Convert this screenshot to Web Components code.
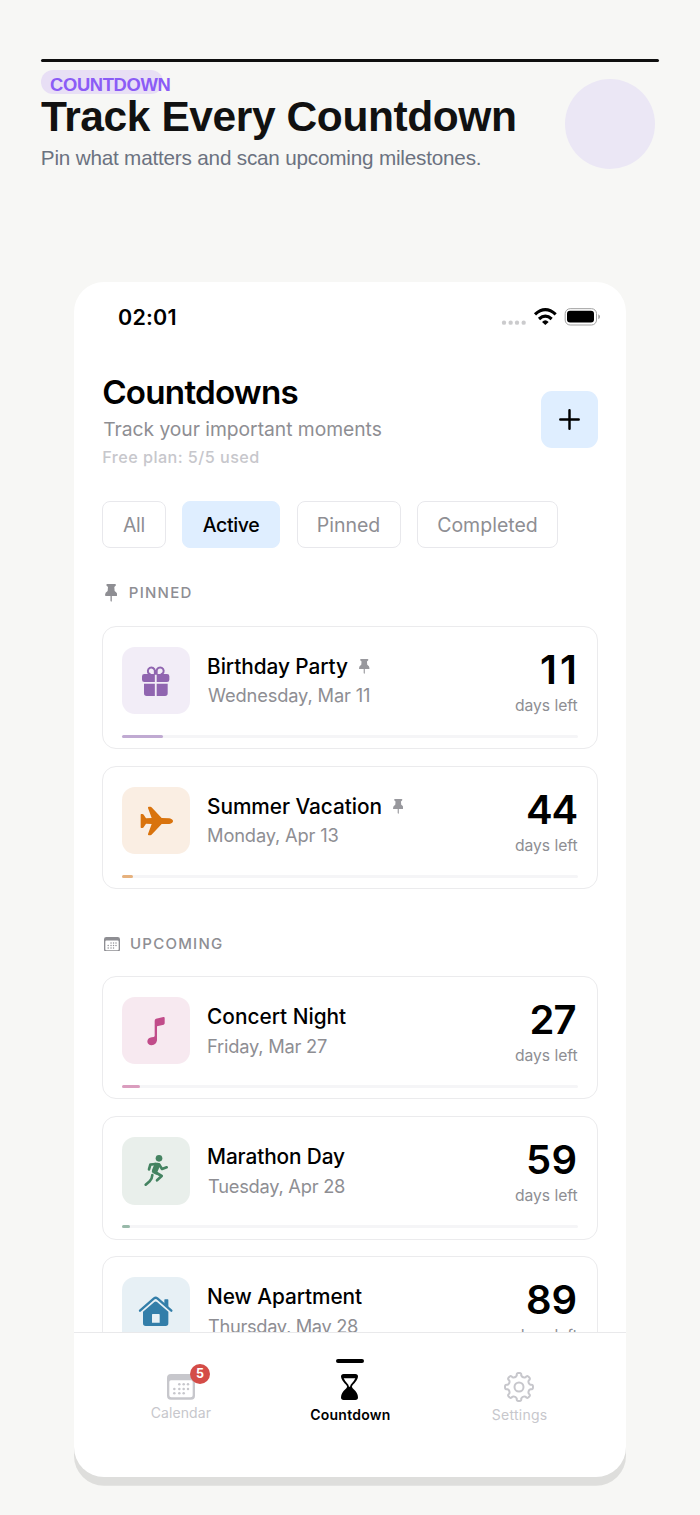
<!DOCTYPE html>
<html lang="en">
<head>
<meta charset="utf-8">
<title>Track Every Countdown</title>
<style>
html, body { margin: 0; background: #f7f7f5; }
body { width: 700px; height: 1515px; overflow: hidden; font-family: Inter, "Liberation Sans", sans-serif; }
</style>
</head>
<body>
<promo-page></promo-page>
<script>
/* Single line of text whose visible glyphs span exactly the width given in "w". */
const ctx = document.createElement('canvas').getContext('2d');
class TextLine extends HTMLElement {
  connectedCallback() {
    const a = n => this.getAttribute(n);
    const root = this.shadowRoot || this.attachShadow({ mode: 'open' });
    root.innerHTML = `<style>
      :host { display: block; flex: none; white-space: nowrap; width: ${a('w')}px; height: ${a('lh')}px;
        font-size: ${a('size')}px; font-weight: ${a('weight') || 400}; line-height: ${a('lh')}px; }
      span { display: inline-block; }
    </style><span><slot></slot></span>`;
    const span = root.querySelector('span');
    const text = this.textContent;
    const cs = getComputedStyle(this);
    ctx.font = `${cs.fontWeight} ${cs.fontSize} ${cs.fontFamily}`;
    const m = ctx.measureText(text);
    const left = -m.actualBoundingBoxLeft;
    const right = m.width - m.actualBoundingBoxRight;
    const ink = span.getBoundingClientRect().width - left - right;
    span.style.letterSpacing = (parseFloat(a('w')) - ink) / (text.length - 1 || 1) + 'px';
    span.style.marginLeft = -left + 'px';
  }
}
customElements.define('text-line', TextLine);

function gearPath() {
  const n = 8, c = 45;
  const P = (r, d) => { const t = d * Math.PI / 180; return (c + r * Math.sin(t)).toFixed(1) + ' ' + (c - r * Math.cos(t)).toFixed(1); };
  let d = '';
  for (let i = 0; i < n; i++) {
    const b = i * 45;
    d += (i ? 'L' : 'M') + P(35, b - 11) + 'Q' + P(42, b - 10.5) + ' ' + P(42, b - 4) + 'L' + P(42, b + 4)
       + 'Q' + P(42, b + 10.5) + ' ' + P(35, b + 11) + 'Q' + P(28.5, b + 22.5) + ' ' + P(35, b + 34);
  }
  return d + 'Z';
}
const CAL = '<path fill="currentColor" fill-rule="evenodd" d="M12 0H72Q84 0 84 12V65Q84 77 72 77H12Q0 77 0 65V12Q0 0 12 0ZM12 19Q7 19 7 24V64Q7 70 13 70H71Q77 70 77 64V24Q77 19 72 19Z"/><g fill="currentColor">'
  + [[37,31],[50,31],[63,31],[22,45],[37,45],[50,45],[63,45],[22,58],[37,58],[50,58]].map(p => `<circle cx="${p[0]}" cy="${p[1]}" r="3.8"/>`).join('') + '</g>';
const ICONS = {
  gift: ['0 0 203 203', '<g fill="currentColor"><path d="M67 81H98.500V105H67Q60 105 60 98V88Q60 81 67 81ZM104 81H135Q142 81 142 88V98Q142 105 135 105H104ZM66 110H98.500V147H74Q66 147 66 139ZM104 110H137V139Q137 147 129 147H104Z"/></g><g fill="none" stroke="currentColor" stroke-width="6"><path d="M98.500 83V71A10.500 10.500 0 1 0 81 80L85 83M104 83V71A10.500 10.500 0 1 1 121 80L117 83"/></g>'],
  plane: ['0 0 203 203', '<path fill="currentColor" d="M142 94Q153 97 153 102Q153 108 142 111L119 111L90 142Q88 145 85 145H80Q77 144 78 141L89 111L72 110L65 121Q64 123 61 123H58Q56 123 56 121V83Q56 81 58 81H61Q64 81 65 83L72 94L89 93L78 63Q77 60 80 59H85Q88 59 90 62L119 93Z"/>'],
  music: ['0 0 203 203', '<path fill="currentColor" d="M98 71Q98 66 102 65L124 60Q128 59 128 63V79Q128 82 125 83L105 88V130Q103 143 89 145Q76 144 76 133Q77 123 89 121L95 120Q98 119 98 116Z"/>'],
  run: ['0 0 203 203', '<circle cx="111" cy="64" r="10" fill="currentColor"/><g fill="none" stroke="currentColor" stroke-width="8" stroke-linecap="round" stroke-linejoin="round"><path d="M101 81L85 83L81 97"/><path d="M111 82L120 96L134 91"/><path d="M99 105L119 117L105 130"/><path d="M91 114Q90 127 83 133L71 143"/></g><path fill="currentColor" d="M98 77H108Q116 79 114 87L106 105L104 114L92 108Q88 105 90 99L96 84Z"/>'],
  house: ['0 0 203 203', '<path fill="none" stroke="currentColor" stroke-width="7" stroke-linecap="round" stroke-linejoin="round" d="M54 101L96 64Q101 60 106 64L148 101"/><path fill="currentColor" d="M127 69Q127 67 129 67H137Q139 67 139 69V93L127 83Z"/><path fill="currentColor" fill-rule="evenodd" d="M63 104L97 75Q101 72 105 75L139 104V139Q139 147 131 147H71Q63 147 63 139ZM90 113V137H113V113Q113 111 111 111H92Q90 111 90 113Z"/>'],
  pin: ['0 0 37 54', '<path fill="currentColor" d="M7 0H30Q33 0 33 3Q33 5 31 6L28 9L29 21Q37 26 37 33Q37 36 34 36H20.500V50L18.500 54L16.500 50V36H3Q0 36 0 33Q0 26 8 21L9 9L6 6Q4 5 4 3Q4 0 7 0Z"/>'],
  calendar: ['0 0 84 77', CAL],
  hourglass: ['0 0 51 78', '<path fill="currentColor" fill-rule="evenodd" d="M8 0H43Q51 0 51 8Q50 18 35 33Q30 38 35 43Q51 57 51 70Q51 78 43 78H8Q0 78 0 70Q0 57 16 43Q21 38 16 33Q1 18 0 8Q0 0 8 0ZM8 13Q11 21 22 32L24 38H27L29 32Q40 21 43 13Z"/>'],
  gear: ['0 0 90 90', `<g fill="none" stroke="currentColor" stroke-width="6" stroke-linejoin="round"><path d="${gearPath()}"/><circle cx="45" cy="45" r="13.500"/></g>`],
  plus: ['0 0 64 64', '<path fill="none" stroke="currentColor" stroke-width="7.500" stroke-linecap="round" d="M32 4V60M4 32H60"/>'],
  status: ['0 0 300 54', '<g fill="#cbcbcd"><circle cx="9" cy="44" r="6.500"/><circle cx="29" cy="44" r="6.500"/><circle cx="48" cy="44" r="6.500"/><circle cx="68" cy="44" r="6.500"/></g><g fill="none" stroke="#000" stroke-width="9.500"><path d="M102 19Q133 -9 164 19"/><path d="M114 33Q133 16 152 33"/></g><path d="M123 42Q133 32 143 42L133 51Z"/><rect x="192.500" y="2" width="94" height="49" rx="15" fill="none" stroke="#a0a0a0" stroke-width="3"/><rect x="198" y="8.500" width="81" height="35" rx="9"/><path fill="#a0a0a0" d="M292 19Q297 21 297 26.500Q297 32 292 34Z"/>']
};
class UiIcon extends HTMLElement {
  connectedCallback() {
    const [box, body] = ICONS[this.getAttribute('name')];
    const w = this.getAttribute('w'), h = this.getAttribute('h');
    this.attachShadow({ mode: 'open' }).innerHTML = `<style>:host{display:block;flex:none;width:${w}px;height:${h}px}svg{display:block}</style>
      <svg width="${w}" height="${h}" viewBox="${box}" preserveAspectRatio="none">${body}</svg>`;
  }
}
customElements.define('ui-icon', UiIcon);

class PromoHeader extends HTMLElement {
  connectedCallback() {
    this.attachShadow({ mode: 'open' }).innerHTML = `<style>
      :host { display: block; height: 223px; padding: 59px 41px 0; font-family: "Liberation Sans", Arial, sans-serif; }
      .rule { height: 2.700px; border-radius: 2px; background: #0f0f0f; }
      .row { display: flex; justify-content: space-between; padding: 8.300px 3.700px 0 0; }
      .pill { width: 113px; height: 24px; padding-left: 9px; border-radius: 12px; background: #e8dff5; color: #8b5cf6; }
      .title { color: #111; } .sub { color: #6b7280; }
      .dot { width: 90.600px; height: 90.600px; margin-top: 8.700px; border-radius: 50%; background: #ebe7f5; }
    </style>
    <div class="rule"></div>
    <div class="row">
      <div>
        <div class="pill"><text-line size="18.400" weight="700" w="120.500" lh="30">COUNTDOWN</text-line></div>
        <text-line class="title" size="42.500" weight="700" w="474" lh="46.400">Track Every Countdown</text-line>
        <text-line class="sub" size="20.700" w="438" lh="36.500" style="margin-left:.8px">Pin what matters and scan upcoming milestones.</text-line>
      </div>
      <div class="dot"></div>
    </div>`;
  }
}
customElements.define('promo-header', PromoHeader);

class FilterChip extends HTMLElement {
  connectedCallback() {
    const on = this.hasAttribute('active');
    this.attachShadow({ mode: 'open' }).innerHTML = `<style>
      :host { display: flex; justify-content: center; box-sizing: border-box; width: ${this.getAttribute('box')}px; height: 47px;
        border: 1.500px solid ${on ? '#dfeeff' : '#e8e8ec'}; border-radius: 8px; background: ${on ? '#dfeeff' : '#fff'}; color: ${on ? '#000' : '#8e8e93'}; }
    </style><slot></slot>`;
  }
}
customElements.define('filter-chip', FilterChip);

class SectionLabel extends HTMLElement {
  connectedCallback() {
    this.attachShadow({ mode: 'open' }).innerHTML = `<style>
      :host { display: flex; align-items: center; box-sizing: border-box; color: #8e8e93; }
    </style><slot></slot>`;
  }
}
customElements.define('section-label', SectionLabel);

class CountdownCard extends HTMLElement {
  connectedCallback() {
    const a = n => this.getAttribute(n);
    this.attachShadow({ mode: 'open' }).innerHTML = `<style>
      :host { display: block; box-sizing: border-box; height: 123.700px; margin-bottom: 16.400px; border: 1px solid #ebebed; border-radius: 14px; padding: 20px 19.500px 0 19.200px; }
      .row { display: flex; height: 88.200px; }
      .tile { width: 67.700px; height: 67.700px; border-radius: 13px; background: ${a('tint')}; color: ${a('tone')}; }
      .text { flex: 1; padding-left: 18.200px; color: #8e8e93; }
      .name { display: flex; align-items: center; gap: 11px; height: 38.800px; color: #000; }
      .name text-line { margin-top: 3px; }
      .name ui-icon { color: #98989d; margin-top: 1px; }
      .count { display: flex; flex-direction: column; align-items: flex-end; color: #8e8e93; }
      .num { color: #000; margin-right: ${a('inset') || 1}px; }
      .bar { height: 3px; border-radius: 1.500px; background: #f5f5f7; }
      .fill { height: 3px; width: ${a('fill')}px; border-radius: 1.500px; background: ${a('tone')}; opacity: .52; }
    </style>
    <div class="row">
      <div class="tile"><ui-icon name="${a('icon')}" w="67.700" h="67.700"></ui-icon></div>
      <div class="text">
        <div class="name"><text-line size="20.800" weight="500" w="${a('name-w')}" lh="38.800">${a('name')}</text-line>${this.hasAttribute('pinned') ? '<ui-icon name="pin" w="10.500" h="15"></ui-icon>' : ''}</div>
        <text-line size="18.300" w="${a('date-w')}" lh="21.600">${a('date')}</text-line>
      </div>
      <div class="count">
        <text-line class="num" size="40" weight="600" w="${a('days-w')}" lh="45">${a('days')}</text-line>
        <text-line size="15.700" w="62.500" lh="28.400">days left</text-line>
      </div>
    </div>
    <div class="bar"><div class="fill"></div></div>`;
  }
}
customElements.define('countdown-card', CountdownCard);

class TabItem extends HTMLElement {
  connectedCallback() {
    const a = n => this.getAttribute(n), on = this.hasAttribute('active');
    this.attachShadow({ mode: 'open' }).innerHTML = `<style>
      :host { display: flex; flex-direction: column; align-items: center; flex: 1; color: ${on ? '#000' : '#c7c7cc'}; }
      .mark { width: 28.500px; height: 3.700px; margin-top: 26px; border-radius: 2px; background: ${on ? '#000' : 'transparent'}; }
      .icon { position: relative; display: flex; align-items: center; height: 30px; margin-top: 9.300px; }
      .badge { position: absolute; left: 23px; top: -8.300px; width: 20px; height: 20px; border-radius: 50%; background: #d44c47; color: #fff; display: flex; justify-content: center; }
    </style>
    <div class="mark"></div>
    <div class="icon"><ui-icon name="${a('icon')}" w="${a('iw')}" h="${a('ih')}"></ui-icon>${a('badge') ? `<div class="badge"><text-line size="12.500" weight="700" w="7.500" lh="20">${a('badge')}</text-line></div>` : ''}</div>
    <text-line size="14" weight="${on ? 600 : 400}" w="${a('label-w')}" lh="${a('lh')}">${a('label')}</text-line>`;
  }
}
customElements.define('tab-item', TabItem);

class PhoneScreen extends HTMLElement {
  connectedCallback() {
    this.attachShadow({ mode: 'open' }).innerHTML = `<style>
      :host { display: flex; flex-direction: column; box-sizing: border-box; width: 552px; height: 1195px; margin-left: 74px; border-radius: 30px; overflow: hidden; background: #fff; box-shadow: 0 8.800px 0 #dededc; }
      .status { display: flex; justify-content: space-between; height: 70px; padding: 0 25px 0 45px; }
      .status ui-icon { margin-top: 26px; }
      .content { height: 980px; overflow: hidden; padding: 0 28px; }
      .head { display: flex; justify-content: space-between; height: 149px; }
      .title { margin: 25px 0 0 1.200px; color: #000; }
      .sub { margin: -1px 0 0 1.200px; color: #8e8e93; } .plan { margin-left: 1.300px; color: #c7c7cc; }
      .add { display: flex; align-items: center; justify-content: center; width: 56.700px; height: 56.700px; margin-top: 39px; border-radius: 11px; background: #dfeeff; }
      .chips { display: flex; gap: 16.500px; }
      .pinned { height: 77.600px; padding-top: 35.400px; padding-left: 3px; padding-bottom: 22px; gap: 12.500px; }
      .upcoming { height: 70px; padding: 28px 0 21.700px 2px; gap: 11px; }
      .tabs { flex: 1; display: flex; border-top: 1.500px solid #e9e9eb; padding: 0 22px; }
    </style>
    <div class="status"><text-line size="21.500" weight="600" w="56.500" lh="70">02:01</text-line><ui-icon name="status" w="100" h="18"></ui-icon></div>
    <div class="content">
      <div class="head">
        <div>
          <text-line class="title" size="33.200" weight="600" w="194.300" lh="30.600">Countdowns</text-line>
          <text-line class="sub" size="19.300" w="278.500" lh="44.600">Track your important moments</text-line>
          <text-line class="plan" size="16.200" weight="500" w="155" lh="12.400">Free plan: 5/5 used</text-line>
        </div>
        <div class="add"><ui-icon name="plus" w="21" h="21"></ui-icon></div>
      </div>
      <div class="chips">
        <filter-chip box="63.500"><text-line size="19.500" w="21.500" lh="46">All</text-line></filter-chip>
        <filter-chip box="98" active><text-line size="19.500" weight="500" w="56.500" lh="46">Active</text-line></filter-chip>
        <filter-chip box="104"><text-line size="19.500" w="61.500" lh="46">Pinned</text-line></filter-chip>
        <filter-chip box="141"><text-line size="19.500" w="98.700" lh="46">Completed</text-line></filter-chip>
      </div>
      <section-label class="pinned"><ui-icon name="pin" w="12.300" h="18"></ui-icon><text-line size="15" weight="500" w="60.700" lh="20">PINNED</text-line></section-label>
      <countdown-card icon="gift" tint="#f2edf7" tone="#9065b0" name="Birthday Party" name-w="140" date="Wednesday, Mar 11" date-w="161" days="11" days-w="33" inset="3.500" fill="41" pinned></countdown-card>
      <countdown-card icon="plane" tint="#faeee3" tone="#d9730d" name="Summer Vacation" name-w="173.500" date="Monday, Apr 13" date-w="130.500" days="44" days-w="48.500" fill="11" pinned></countdown-card>
      <section-label class="upcoming"><ui-icon name="calendar" w="16" h="14.700"></ui-icon><text-line size="15" weight="500" w="91" lh="20">UPCOMING</text-line></section-label>
      <countdown-card icon="music" tint="#f7e9f0" tone="#c14c8a" name="Concert Night" name-w="138" date="Friday, Mar 27" date-w="119" days="27" days-w="44" inset="2" fill="17.700"></countdown-card>
      <countdown-card icon="run" tint="#e9efeb" tone="#448361" name="Marathon Day" name-w="137" date="Tuesday, Apr 28" date-w="137" days="59" days-w="47.500" inset="2" fill="8.200"></countdown-card>
      <countdown-card icon="house" tint="#e7f0f5" tone="#337ea9" name="New Apartment" name-w="154" date="Thursday, May 28" date-w="150" days="89" days-w="47.500" inset="2" fill="6"></countdown-card>
    </div>
    <div class="tabs">
      <tab-item icon="calendar" iw="28" ih="25.700" label="Calendar" label-w="60" lh="22.800" badge="5"></tab-item>
      <tab-item icon="hourglass" iw="17" ih="26" label="Countdown" label-w="79.500" lh="25.200" active></tab-item>
      <tab-item icon="gear" iw="30" ih="30" label="Settings" label-w="55" lh="26.600"></tab-item>
    </div>`;
  }
}
customElements.define('phone-screen', PhoneScreen);

class PromoPage extends HTMLElement {
  connectedCallback() {
    this.attachShadow({ mode: 'open' }).innerHTML = `<style>
      :host { display: block; width: 700px; height: 1515px; background: #f7f7f5; }
      promo-header { box-sizing: border-box; height: 282px; }
    </style><promo-header></promo-header><phone-screen></phone-screen>`;
  }
}
customElements.define('promo-page', PromoPage);
</script>
</body>
</html>
